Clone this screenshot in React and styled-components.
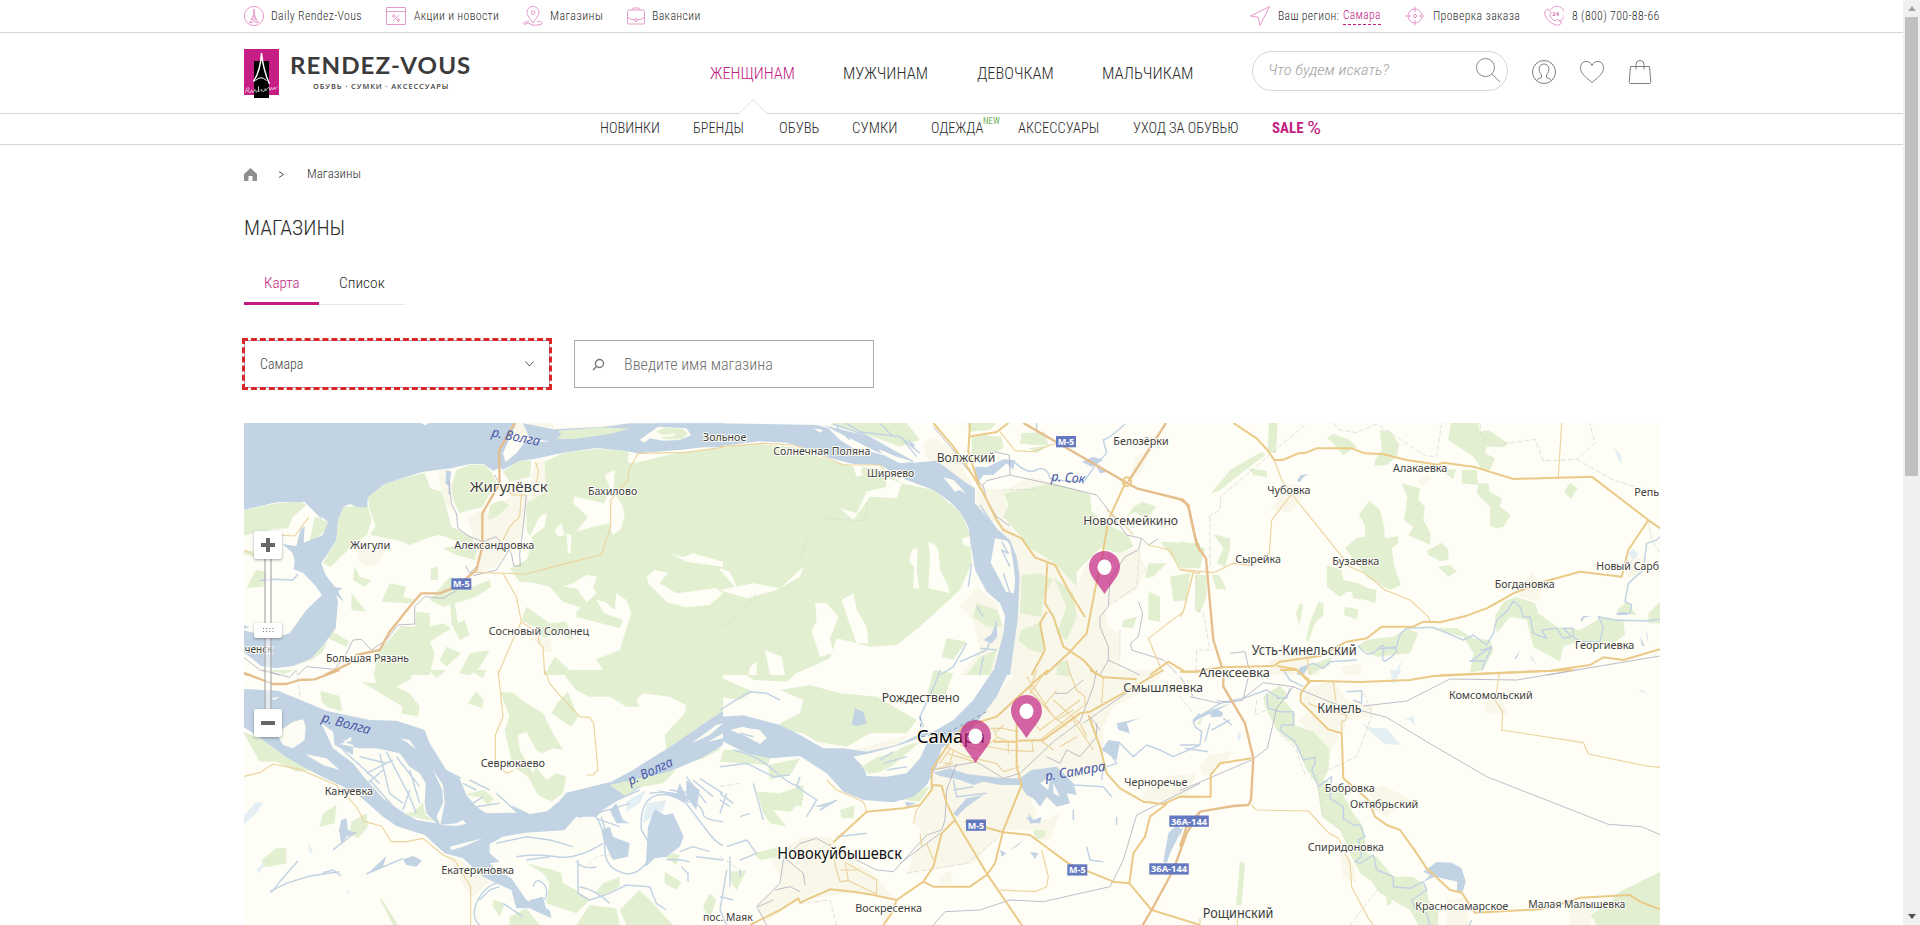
import React, { useLayoutEffect, useRef, useState } from 'react';
import styled, { createGlobalStyle, css } from 'styled-components';

const Global = createGlobalStyle`
  * { box-sizing: border-box; }
  html, body { margin: 0; height: 925px; overflow: hidden; background: #fff; }
  body { font-family: Roboto, "Liberation Sans", sans-serif; font-stretch: 75%; font-weight: 300; color: #2b2b2b; }
`;

const Page = styled.div`
  display: flex;
  width: 1920px;
  height: 925px;
  overflow: hidden;
`;
const Content = styled.div`
  flex: none;
  width: 1903px;
`;
const Wrap = styled.div`
  width: 1416px;
  margin: 0 0 0 244px;
`;

/* Text set to a given measure */
const FitBox = styled.span`
  display: inline-block;
  flex: none;
  width: ${(p) => p.$w}px;
  white-space: nowrap;
`;
const FitInner = styled.span`
  display: inline-block;
  transform-origin: 0 50%;
`;
function Fit({ w, children, ...rest }) {
  const ref = useRef(null);
  const [k, setK] = useState(1);
  useLayoutEffect(() => {
    if (ref.current) setK(w / ref.current.offsetWidth);
  }, [w]);
  return (
    <FitBox $w={w} {...rest}>
      <FitInner ref={ref} style={{ transform: `scaleX(${k})` }}>{children}</FitInner>
    </FitBox>
  );
}

/* ---------- top bar ---------- */
const TopBar = styled.div`
  height: 33px;
  border-bottom: 1px solid #d6d6d6;
`;
const TopRow = styled(Wrap)`
  display: flex;
  justify-content: space-between;
  height: 32px;
  font-size: 13px;
  letter-spacing: 0.4px;
`;
const TopGroup = styled.div`
  display: flex;
  align-items: center;
  height: 32px;
`;
const TopLink = styled.a`
  display: flex;
  align-items: center;
  margin-left: ${(p) => p.$gap || 0}px;
  & > span { padding-bottom: 2px; }
`;
const LineIcon = styled.svg`
  flex: none;
  width: ${(p) => p.$w || 20}px;
  height: ${(p) => p.$h || p.$w || 20}px;
  margin-right: ${(p) => p.$mr || 0}px;
  fill: none;
  stroke: ${(p) => p.$c || '#e07fbe'};
  stroke-width: ${(p) => p.$s || 0.8};
`;
const City = styled.span`
  display: inline-block;
  height: 18px;
  margin-left: 4px;
  color: #c21d81;
  line-height: 16px;
  border-bottom: 1px dashed #c21d81;
`;

/* ---------- header ---------- */
const Header = styled.div`
  height: 81px;
  border-bottom: 1px solid #d6d6d6;
`;
const HeaderRow = styled(Wrap)`
  display: flex;
  height: 80px;
`;
const Logo = styled.div`
  display: flex;
  width: 466px;
  padding-top: 16px;
`;
const LogoText = styled.div`
  display: flex;
  flex-direction: column;
  margin-left: 11px;
  padding-top: 3px;
  font-stretch: 100%;
`;
const Brand = styled.div`
  height: 28px;
  font: 700 22.5px/28px Lato, sans-serif;
  letter-spacing: 1px;
  color: #3b3b3b;
`;
const Slogan = styled.div`
  padding-left: 23px;
  font: 600 7.4px/12px "Open Sans", sans-serif;
  letter-spacing: 0.9px;
  color: #444;
`;
const MainNav = styled.nav`
  display: flex;
  width: 542px;
  padding-top: 29px;
  font-size: 17px;
  line-height: 22px;
`;
const MainLink = styled.a`
  position: relative;
  margin-right: ${(p) => p.$mr || 0}px;
  color: ${(p) => (p.$on ? '#c21d81' : '#2b2b2b')};
`;
const Caret = styled.svg`
  position: absolute;
  left: 29px;
  top: 37px;
  width: 28px;
  height: 16px;
`;
const Search = styled.div`
  display: flex;
  align-items: center;
  justify-content: space-between;
  width: 256px;
  height: 40px;
  margin: 18px 24px 0 0;
  padding: 0 7px 2px 15px;
  border: 1px solid #d6d6d6;
  border-radius: 20px;
  color: #a3a3a3;
  font-size: 15px;
  font-style: italic;
`;
const Tools = styled.div`
  display: flex;
  gap: 24px;
  padding-top: 27px;
`;

const SubNav = styled.nav`
  display: flex;
  height: 31px;
  padding-left: 600px;
  border-bottom: 1px solid #d6d6d6;
  font-size: 14px;
  line-height: 29px;
`;
const SubLink = styled.a`
  position: relative;
  display: flex;
  margin-right: ${(p) => p.$mr || 0}px;
`;
const New = styled.span`
  position: absolute;
  left: 52px;
  top: 1px;
  font-size: 8.5px;
  font-weight: 400;
  line-height: 12px;
  color: #77b25a;
`;
const Sale = styled.span`
  display: flex;
  gap: 4px;
  color: #c21d81;
  font-weight: 700;
`;
const Percent = styled.span`
  font-size: 17.5px;
  font-weight: 400;
  line-height: 28px;
`;

/* ---------- page body ---------- */
const Crumbs = styled.div`
  display: flex;
  align-items: center;
  height: 26px;
  margin-top: 16px;
  padding-top: 1px;
  font-size: 12.5px;
  & > span { padding-bottom: 3px; }
`;
const Title = styled.h1`
  height: 30px;
  margin: 26px 0 0;
  font-size: 21px;
  line-height: 30px;
  font-weight: 350;
`;
const Tabs = styled.div`
  display: flex;
  margin-top: 25px;
`;
const Tab = styled.div`
  display: flex;
  width: ${(p) => p.$w}px;
  height: 37px;
  padding-left: 20px;
  font-size: 15.5px;
  font-weight: 360;
  line-height: 31px;
  border-bottom: 1px solid #e6e6e6;
  ${(p) => p.$on && css`color: #c21d81; border-bottom: 3px solid #c21d81;`}
`;
const Filters = styled.div`
  display: flex;
  gap: 24px;
  margin: 35px 0;
`;
const Field = styled.div`
  display: flex;
  align-items: center;
  width: ${(p) => p.$w}px;
  height: 48px;
  border: 1px solid #aeaeae;
  padding: 0 ${(p) => p.$pr || 15}px 0 ${(p) => p.$pl}px;
  font-size: ${(p) => p.$fs}px;
  color: ${(p) => p.$c};
  ${(p) => p.$marked && css`outline: 3px dashed #d9272a; outline-offset: -1px; justify-content: space-between;`}
`;

/* ---------- map ---------- */
const MapBox = styled.div`
  position: relative;
  width: 1416px;
  height: 502px;
  overflow: hidden;
  background: #fefef6;
`;
const MapSvg = styled.svg`
  display: block;
  width: 1416px;
  height: 502px;
`;
const PinSvg = styled.svg`
  position: absolute;
  left: ${(p) => p.$x}px;
  top: ${(p) => p.$y}px;
  width: 31px;
  height: 43px;
`;
const Zoom = styled.div`
  position: absolute;
  left: 10px;
  top: 108px;
  display: flex;
  flex-direction: column;
  align-items: center;
  width: 28px;
`;
const ZoomBtn = styled.div`
  display: flex;
  align-items: center;
  justify-content: center;
  width: 28px;
  height: ${(p) => p.$h || 28}px;
  border-radius: 2px;
  background: #fff;
  box-shadow: 0 1px 3px rgba(0, 0, 0, 0.35);
  z-index: 1;
`;
const Track = styled.div`
  width: 8px;
  height: ${(p) => p.$h}px;
  border: solid rgba(120, 120, 120, 0.38);
  border-width: 0 2px;
  background: rgba(255, 255, 255, 0.5);
`;

/* ---------- scrollbar ---------- */
const Scroll = styled.div`
  display: flex;
  flex-direction: column;
  align-items: center;
  width: 17px;
  height: 925px;
  background: #f0f0f0;
`;
const Arrow = styled.div`
  flex: none;
  display: flex;
  align-items: center;
  justify-content: center;
  width: 17px;
  height: 17px;
`;
const Thumb = styled.div`
  width: 13px;
  height: 459px;
  margin-bottom: auto;
  background: #c0c0c0;
`;

/* Map sheets: each one is drawn at triple scale from its own origin */
const ORIGIN = { a: [243, 420], b: [243, 670], c: [720, 420], d: [720, 670], e: [1180, 420], f: [1180, 670] };

const FOREST = {
  a: [
    'M0 270L100 250 175 245 190 256 150 290 135 325 90 328 0 348Z',
    'M215 290L255 305 245 335 200 365Z',
    'M0 395L30 392 35 412 0 400ZM40 450L75 455 60 500 10 505 30 465Z',
    'M300 262L345 258 372 250 385 300 372 345 330 372 300 405 262 442 240 430 280 360 285 300Z',
    'M375 232L420 195 460 180 545 158 562 205 595 215 610 260 625 320 690 352 690 380 640 362 590 345 560 352 500 375 470 362 380 345 398 318 380 270Z',
    'M625 200L640 150 680 134 725 134 748 160 762 190 735 230 718 262 682 270 650 280 630 240Z',
    'M780 155L830 122 865 122 862 170 800 185Z M740 255L775 240 800 255 760 290 735 300Z',
    'M905 125L960 99 1060 86 1152 93 1180 128 1310 97 1440 85V765H1090L1060 718 1130 690 1165 580 1150 540 1120 520 1115 570 1085 545 1060 540 1085 580 1140 600 1130 625 1000 590 1000 575 1060 520 1050 500 1062 470 1030 465 990 490 960 500 1000 505 1030 545 1020 565 960 545 920 500 870 488 830 485 800 445 850 420 870 360 850 330 850 250 910 215Z',
    'M600 385L650 375 700 390 695 420 640 405Z M620 470L690 500 740 480 745 500 700 530 600 560 560 540Z',
    'M335 440L350 470 385 480 365 500 330 480Z M440 490L490 500 480 530 520 540 500 550 415 545Z M325 520L370 575 325 570Z',
    'M565 445L585 440 585 480 562 480Z M250 625L320 665 310 680 255 655ZM620 530L635 545 645 610 665 600 680 645 650 660 625 610Z',
    'M520 575L560 580 560 620 600 610 625 625 560 665 575 700 560 765H395L400 700 475 618 515 620Z',
    'M850 560L920 610 970 605 990 660 945 640 900 655 880 625 835 600Z M610 680L655 700 610 740 590 720Z M680 700L740 690 705 750 680 765 650 760Z',
    'M935 710L975 745 990 765H905Z M1215 705L1240 710 1240 765H1200Z M215 690L255 665 235 700 205 720 150 738 180 715Z',
  ],
  b: [
    'M355 35L400 40 390 5 400 0H515L500 30 460 50 500 70 530 110 525 140 475 130 480 110Z',
    'M232 62L290 78 298 125 250 110 235 92Z M60 0H155L125 12ZM700 65L722 90 718 115 675 100Z M560 0H610L580 25Z M680 0H730L720 25Z',
    'M770 65L810 68 850 100 900 130 930 190 960 240 930 235 895 250 880 240 850 185 825 195 830 240 870 310 880 290 910 330 940 310 970 320 960 370 925 395 885 375 855 320 810 290 785 180 800 140Z',
    'M955 0H1440V122L1340 190 1270 240 1265 195 1325 130 1330 105 1280 80 1200 70 1180 90 1190 110 1150 110 1100 80 1040 80 1000 60 975 30Z',
    'M975 65L1005 140 985 170 925 130 945 95Z M0 185L60 210 130 262 220 300 160 305 100 275 50 275Z M270 290L330 350 340 380 290 340Z',
    'M240 430L280 405 275 460 230 470Z M55 570L100 535 130 535 130 580 80 590 60 590Z M325 455L370 430 375 470 345 505 320 490Z M415 685L465 765H450L412 690Z',
    'M490 440L540 400 560 440 585 455 510 440Z M670 375L720 360 750 385 740 410 700 370Z',
    'M850 580L930 600 955 610 960 640 1000 660 1040 690 1000 730 970 720 910 700 920 640 900 610Z M1000 765L1040 705 1120 715 1130 765Z M1080 640L1130 620 1130 650 1080 680 1060 665Z',
    'M1380 240L1440 235 1380 265 1310 290 1260 340 1170 355 1150 380 1200 345 1300 300Z M1400 670L1420 690 1400 750 1380 710Z M1130 720L1190 660 1220 690 1290 765H1150Z',
    'M750 690L785 700 770 740 750 710Z M800 740L850 715 890 765H800Z M1265 605L1315 635 1300 660 1265 640ZM1290 550L1310 555 1300 585 1265 560Z',
  ],
  c: [
    'M0 80L120 72 220 82 320 118 400 140 410 170 430 140 490 150 545 190 640 210 720 275 750 340 755 430 720 510 665 560 600 620 530 675 450 680 350 655 330 715 240 755 200 765H0Z',
    'M850 220L1000 188 1110 222 1115 275 1170 318 1225 345 1240 380 1200 400 1140 385 1100 425 1070 455 1070 500 1000 425 930 385 850 290 865 255Z',
    'M905 40L975 35 985 75 940 75 900 70Z M790 45L845 50 850 85 800 110 755 120 755 50Z M925 85L990 75 950 100ZM740 9H830L810 30 750 35Z',
    'M330 15L460 50 540 80 600 60 560 9H340Z M1270 245L1308 260 1280 300 1245 275 1220 290 1240 260Z',
    'M905 465L960 460 1000 480 970 530 965 590 900 580Z M905 630L965 605 970 700 930 690 895 660Z M1000 470L1060 520 1070 590 1040 660 1010 640 1040 560Z',
    'M1285 430L1340 430 1300 470 1275 475Z M1285 515L1320 530 1320 605 1285 600Z M1350 470L1410 460 1400 540 1360 545Z M1210 600L1250 590 1240 625 1205 620Z M1320 365L1440 370V445H1380L1340 390Z',
    'M770 550L830 570 850 620 800 620 760 590Z M780 710L830 690 810 765H740ZM680 655L740 665 720 690 700 720 665 710ZM1010 730L1040 720 1055 765H1010Z',
  ],
  d: [
    'M60 0H240L200 35 100 30ZM180 60L270 45 360 70 470 80 590 150 560 190 450 190 380 230 290 215 250 190 180 180 180 160 240 130 250 90Z',
    'M0 20L40 40 100 65 60 90 0 80ZM10 240L90 240 150 265 145 285 0 275ZM145 285L240 265 215 310 150 330Z',
    'M110 365L180 370 250 345 250 390 210 425 160 420 200 470 150 460 130 430ZM180 390L250 360 245 410Z',
    'M100 550L180 530 175 560 120 570ZM30 605L80 600 50 660 35 640Z M640 0L700 10 670 90 620 80Z M530 370L630 350 600 395 545 390Z M1020 0H1045V20L1020 15ZM940 480H975V500L945 510Z',
    'M430 290L470 265 540 235 600 210 560 240 500 290 460 310Z M360 420L405 405 400 445 365 445Z',
  ],
  e: [
    'M267 9H293L288 100 262 95Z M92 222L150 150 245 95 257 105 215 135 120 210ZM205 145L260 152 262 172 220 165Z',
    'M440 55L460 42 510 60 530 80 490 105 455 65ZM600 30L632 35 658 75 650 110 620 135 585 138 583 125 605 90Z',
    'M812 9H895L900 35 925 30 985 70 970 82 920 80 915 100 945 115 930 150 905 148 880 110 805 60ZM845 150L890 150 895 195 845 190ZM895 190L925 190 930 215 965 235 960 260 992 285 970 320 950 325 930 318 930 260 890 220Z',
    'M1170 188L1193 205 1172 237 1152 215Z M665 190L720 205 715 240 735 260 730 300 752 340 750 375 685 345 700 320 672 300 682 230Z',
    'M568 242L600 270 612 320 615 355 655 348 655 370 635 385 645 445 663 495 630 510 560 470 495 385 530 355 555 350 555 315 537 285Z',
    'M440 435L485 450 490 480 535 490 565 505 590 510 585 550 560 540 520 535 515 515 500 515 480 530 440 500ZM740 392L785 368 805 390 805 420 780 423 745 405ZM775 440L810 435 830 455 805 470ZM495 560L535 568 530 598 492 585Z',
    'M360 548L370 555 358 615 348 580ZM415 545L430 550 430 585 405 610 385 665 378 660 390 605Z M100 343L150 355 150 385 135 440 110 430 130 385Z',
    'M0 362L75 385 60 445 0 430ZM95 465L118 465 140 508 110 508ZM45 465H80L80 530 60 578 48 570ZM0 465L30 460 20 520 0 530Z',
    'M560 660L640 650 680 625 715 640 690 700 590 710 530 680ZM750 625L830 625 880 655 930 660 940 690 910 750 870 758 880 700 850 650Z',
    'M945 590L970 545 1010 530 1065 550 1075 580 1130 620 1200 630 1270 590 1330 600 1335 645 1300 670 1190 665 1150 680 1140 725 1060 680 1040 600 990 590 950 640Z M1310 570L1340 545 1370 585 1320 580ZM1405 580L1440 545V610H1405ZM390 735L455 712 450 735 390 765ZM780 150L828 148 820 178Z',
  ],
  f: [
    'M250 80L300 45 320 70 310 90 345 130 345 165 400 185 450 240 445 300 430 330 455 340 460 360 485 365 520 430 540 455 550 475 560 550 590 560 640 620 700 620 740 650 745 690 775 725 775 765H715L690 720 600 670 570 630 540 610 510 550 480 480 425 440 410 340 380 300 350 230 290 180 255 110Z',
    'M180 575L195 580 190 640 185 705H168Z M1440 605L1310 670 1290 700 1232 735 1250 765H1440Z M50 160L70 140 60 165ZM620 620L635 700 620 710Z',
  ],
};

const CLEAR = {
  a: [
    'M1085 165L1115 150 1112 215 1140 260 1145 290 1132 330 1108 345 1100 310 1050 320 1000 335 1035 290 990 250 995 230 1085 250 1100 200Z',
    'M890 290L912 278 905 320 865 350 855 410 830 430 865 340ZM935 330L955 310 965 345 945 350ZM970 340L985 345 983 400 975 400Z',
    'M1282 400L1320 412 1350 400 1440 425V440L1380 432 1330 425Z M1212 470L1235 450 1275 458 1250 490 1300 520 1420 505 1440 520 1400 555 1330 562 1270 545 1215 490Z',
    'M1155 105H1182V128H1155Z',
  ],
  c: [
    'M575 390L592 385 590 450 598 505 580 505 582 440 568 425ZM625 365L640 370 655 390 660 450 680 490 690 520 650 510 625 505 630 410Z',
    'M285 548L320 550 355 590 330 655 340 700 300 710 275 635 290 600ZM365 540L400 520 410 570 440 620 445 670 410 670 385 600Z',
    'M360 265L410 280 440 215 500 200 495 170 545 190 530 235 450 230 400 300Z M0 445L30 455 50 500 100 490 180 505 250 440 240 470 170 510 80 535 0 510 45 500 0 450Z',
    'M135 690L185 710 195 765H150ZM90 740L110 725 110 765H85ZM725 355L750 350 750 380 730 375ZM400 130L430 165 410 170Z M775 165L800 155 770 200Z',
  ],
};

const TOWN = {
  a: ['M585 150L620 150 620 240 650 300 600 240Z M670 290L720 270 745 280 835 200 860 240 870 215 990 212 980 225 940 250 970 260 960 285 860 250 835 345 790 400 760 440 700 460 690 340Z M345 390H425L410 430 370 440 345 420Z M875 125H915L905 210 860 210Z M845 655H925V695H900L880 665Z', 'M560 10L720 40 640 60 570 40Z M760 10L930 10 940 50 860 60 790 55Z'],
  b: ['M610 555L660 575 740 635 690 680 665 655Z'],
  c: [
    'M610 70L640 50 700 90 760 200 680 160 620 115Z M770 200L850 210 930 170 1000 188 850 220 860 260 850 300 930 390 1000 425 1070 500 1100 430 1250 385 1280 450 1250 510 1160 560 1160 620 1200 640 1200 765H870L895 590 890 450 840 330 770 260Z',
    'M1225 180L1250 110 1300 80 1260 160ZM770 500L830 550 850 620 840 765H720L780 690 760 600 720 560Z',
  ],
  d: ['M900 0H1340L1280 60 1180 110 1150 170 1150 290 1060 330 930 390 950 420 940 480 850 480 760 580 560 610 610 490 580 460 640 350 640 290 700 200Z', 'M150 560L250 500 330 500 380 560 460 610 520 680 400 670 240 690 130 760 110 700 190 640Z M1270 360L1330 320 1430 310 1400 380 1270 400ZM930 470L1020 430 990 510 950 510ZM655 620L690 600 700 640 660 645ZM490 720L520 690 500 765Z M370 250L560 195 480 310Z', 'M0 190L180 170 250 200 120 260Z'],
  e: ['M270 270L330 190 370 200 365 240 330 275ZM710 180L740 160 755 175 730 198ZM1010 510L1055 460 1085 490 1080 545 1020 530ZM1340 420L1400 410 1380 470 1340 470Z M480 740L545 730 540 765H490Z M270 720L380 690 420 765H270Z'],
  f: ['M370 60L460 30 500 90 580 110 570 140 500 150 490 190 440 180 370 100ZM915 80L960 75 985 135 915 130ZM570 370L605 345 690 385 620 440 580 420ZM60 290L90 255 155 245 140 270 100 310 70 315ZM480 550L520 575 530 640 490 620ZM800 690L850 680 870 765H800ZM1165 700L1240 690 1230 765H1170ZM350 150L400 120 440 180 480 200 450 240 400 190Z'],
};

const WATER = {
  a: [
    'M0 0H720L820 10 780 100 790 135 750 152 722 132 680 132 625 145 540 155 460 180 420 195 375 232 372 262 345 262 320 252 300 262 285 300 280 360 235 430 248 465 275 500 285 545 278 625 245 670 205 715 150 738 100 745 55 738 0 695V630L90 655 140 640 190 570 237 525 215 495 180 458 152 448 155 420 148 398 118 372 160 378 172 330 185 318 182 368 240 345 255 305 235 290 200 262 185 246 100 247 0 270Z',
    'M820 100L850 60 900 65 960 60 1100 50 1200 25 1240 10H1440V82L1380 82 1310 90 1182 100 1150 93 1060 84 960 98 870 118 830 122 780 150 770 140Z',
    'M840 10L930 28 1080 20 1160 10H1440V40H1200L1000 62 930 65 860 55Z',
    'M272 500L298 505 285 515 303 547 280 525ZM20 620L0 628V615ZM610 150L625 155 618 200 607 190Z',
  ],
  b: [
    'M0 57L105 62 160 85 250 122 380 150 460 152 545 180 560 220 610 300 650 320 720 350 765 378 810 408 860 432 912 424 950 392 970 368 1105 335 1170 300 1230 262 1290 225 1340 190 1440 122V225L1380 262 1290 300 1220 335 1150 375 1080 420 1060 440 1020 440 970 480 850 488 780 500 740 522 740 550 770 575 740 580 760 600 805 625 850 690 920 720 925 745 860 715 820 715 805 660 760 640 720 620 660 565 605 550 545 495 460 468 420 440 340 370 290 345 240 322 180 290 130 262 60 210 0 170Z',
    'M1208 590L1215 470 1235 418 1265 435 1290 430 1322 500 1310 530 1270 560 1235 565Z M480 568L510 558 537 572 520 590 490 585Z M295 450L310 445 315 480 340 490 310 500 295 525 288 480Z',
    'M1075 480L1100 470 1110 500 1160 520 1155 560 1110 570 1085 520ZM375 610L430 558 420 590 390 605ZM1100 420L1120 400 1140 450 1160 460 1120 460ZM1330 330L1370 360 1360 420 1330 380ZM1240 360L1300 370 1310 340 1340 400Z M860 690L900 680 910 720 870 720Z',
  ],
  c: [
    'M0 10L290 15 325 25 360 60 400 80 470 100 580 128 650 122 700 160 740 190 765 205 765 250 800 290 835 330 870 360 890 410 899 470 893 600 870 765H818L850 640 855 588 840 550 800 515 765 450 752 370 745 320 720 275 690 245 640 210 560 180 480 135 400 132 330 115 290 95 200 68 120 64 0 78Z',
    'M765 140L800 142 850 118 885 120 880 150 860 130 820 165 790 165 770 195ZM1130 140L1165 155 1140 160ZM1085 125L1120 110 1150 120 1115 140ZM790 660L820 640 830 610 832 650 815 670Z',
    'M310 15L450 50 580 125 470 95ZM560 55L585 75 580 85Z',
  ],
  d: [
    'M820 0L760 90 700 150 640 185 600 192 530 225 440 245 370 235 310 235 240 195 180 165 70 136 0 140V210L80 250 150 265 240 258 320 310 370 365 430 390 520 397 580 380 620 345 650 290 665 235 760 170 830 80 868 0Z',
    'M640 308L690 295 740 312 850 325 900 325 935 300 1010 290 1030 310 1060 340 1070 375 1040 370 1050 400 1010 410 980 380 960 410 940 385 920 375 900 345 840 345 790 335 760 345 720 330 660 318Z',
    'M1330 575L1345 490 1370 465 1385 480 1350 550 1340 580ZM395 165L405 115 430 125 440 160 415 168ZM700 430L740 385 790 375 740 410 710 440ZM930 545L955 550 945 567ZM925 430L940 450 965 440 960 460 930 460ZM840 540L860 550 845 560ZM870 540L910 510 890 530Z',
    'M1145 240L1165 210 1200 215 1190 270 1160 250ZM1190 160L1260 145 1220 160 1230 190 1195 180ZM280 410L350 390 310 410ZM450 270L490 260 480 285ZM555 395L590 400 560 410Z',
  ],
  e: ['M350 183L362 165 385 163 370 172 360 187ZM868 720H915L925 710 910 725H870ZM1200 600L1210 588 1235 588 1215 592 1205 605ZM1002 718L1020 690 1010 715ZM1380 650L1395 680 1385 675Z M1400 630L1405 670 1400 650Z M360 740L385 740 370 765H350ZM1310 580L1335 575 1345 585 1310 585Z'],
  f: ['M730 605L770 576 815 578 845 595 857 635 848 665 830 662 832 635 765 620 730 635 750 615ZM50 140L80 125 130 108 150 100 130 112 60 145 35 160ZM88 130L110 115 130 130 125 140 95 142Z M0 480L10 470 0 500Z'],
};

const PALE = {
  b: ['M0 440L40 395 60 400 40 430 0 465ZM40 600L70 570 50 610ZM1150 395L1210 360 1190 400 1150 425ZM1210 400L1270 390 1260 420 1200 460ZM100 180L180 150 150 190ZM195 520L210 545 200 550ZM315 655L322 675 312 665Z'],
  e: ['M1300 83L1320 100 1328 132 1315 120ZM1345 400L1360 385 1375 405 1360 420ZM1055 705L1070 735 1050 715ZM650 750L665 720 655 765H640Z'],
  f: ['M540 155L580 175 620 175 662 225 612 222ZM675 150L700 135 705 170 690 150ZM170 200L182 180 180 215ZM630 0H665L640 45ZM1375 55L1400 68 1385 68Z'],
};

const ISLAND = {
  a: ['M1190 60L1245 20 1330 25 1345 45 1310 60 1260 62 1220 55 1205 68Z', 'M535 9H560L545 16Z'],
  b: [
    'M100 190L150 155 180 148 188 170 185 210 150 235 120 225Z',
    'M235 160L270 185 275 225 330 255 330 225 300 215 325 200 325 212 290 222 350 235 400 235 470 250 500 290 530 310 548 340 545 400 550 430 580 460 520 450 470 420 420 385 370 330 330 280 270 235Z',
    'M570 300L600 345 605 400 592 465 580 440 600 400 598 360Z M650 325L690 320 740 345 790 385 822 428 730 430 700 410 670 375Z M590 465L640 460 660 450 670 462 640 468Z',
    'M620 530L720 505 660 530 625 540ZM470 205L500 210 520 240 490 215ZM185 252L250 265 290 300 240 285ZM775 520L860 488 960 485 1000 440 1040 450 1070 500 1040 560 880 530 830 580 760 545Z',
    'M1345 220L1420 165 1440 160 1400 195ZM1395 215L1440 190V205ZM85 85L110 80 95 90Z',
  ],
  c: ['M670 172L700 180 720 200 740 225 720 210 705 215Z', 'M825 355L860 362 870 375 880 430 885 480 882 520 858 515 835 470 812 428Z', 'M470 85L530 110 580 125 540 130 500 110ZM280 25L310 30 300 38ZM360 60L420 75 440 90 400 85Z'],
  d: ['M30 180L70 170 120 180 140 205 120 222 80 200Z', 'M400 260L450 250 540 225 600 203 640 188 625 210 600 265 560 310 500 320 440 318 430 290Z', 'M960 340L990 320 985 360ZM1000 340L1020 380 1000 370Z'],
};

/* Woods that stand on the river islands */
const GROVE = {
  a: ['M1238 35L1262 24 1320 26 1335 42 1315 58 1268 58 1250 52 1290 48 1300 40 1260 44Z', 'M945 32L1080 22 1160 26 1100 42 1000 56 940 58 955 44Z'],
  b: ['M480 432L512 425 540 398 548 436 578 454 540 448Z', 'M672 372L722 360 752 384 738 408 712 380 690 380Z', 'M1100 345L1150 380 1180 352 1250 338 1300 300 1250 312Z'],
  d: ['M425 290L470 262 520 248 560 226 600 215 560 250 520 285 480 305 445 312Z'],
};

const STREAM = {
  a: ['M620 190L618 225M50 482L90 478 150 480 165 462M200 255L235 295'],
  b: [
    'M1050 430Q1085 470 1085 530T1130 605Q1170 625 1205 585T1195 480Q1190 400 1230 380T1330 400Q1360 440 1390 480T1440 527',
    'M1075 440Q1095 500 1105 560M1220 370Q1290 360 1335 385T1380 430 1440 455M1270 570Q1300 565 1340 575M1360 560L1440 570M1310 545L1350 530 1400 545',
    'M1005 570L1005 670 1040 690 1100 670 1150 645 1220 650 1240 700 1270 720M1000 575Q1020 600 1060 590M1100 700Q1060 660 1010 650M760 520L850 500 920 510 990 530M820 560Q880 550 940 560T1080 520M850 570L920 560',
    'M780 635Q730 640 705 690T710 765M710 690L740 660 770 650M870 650Q880 620 900 640T905 690M780 700L840 740M1315 590L1335 610 1335 635',
    'M85 668L110 635 165 572M80 665L130 640 200 618 290 605M240 608L270 600 295 618M370 612L480 565M270 540L340 485',
    'M340 370L420 300M410 250L440 370 480 400M430 245L500 380 520 430M300 240L410 340M370 310L450 270M460 260L530 350M480 420L500 360M380 330L460 420M500 300L530 400M350 260L430 280M680 330L740 360M690 400L720 380M700 410L770 400M660 340L700 360M760 370L820 425',
    'M1330 320L1390 400M1350 330L1410 380M1370 325L1440 370M1280 360L1350 370M1060 430L1160 400M1060 445L1130 470M1100 400L1190 360',
  ],
  c: [
    'M880 122Q920 165 950 150T990 175Q1050 190 1095 180L1130 130 1160 100 1150 60 1170 50 1195 30 1215 12M950 9L950 30',
    'M380 10L460 60 580 125M420 35L540 50 600 100M340 12L420 40 480 90M350 20L390 60M480 10L520 50M550 60L590 110',
    'M755 430L745 500M740 670L700 740 660 765M720 725L800 690 830 605M790 710L780 765M770 560L790 590M780 685L830 690M845 365L865 400 845 390 870 440M850 460L870 520M780 255L830 330M800 290L850 355',
  ],
  d: [
    'M0 120L40 95 90 65 140 70 180 90M40 240Q110 255 160 300T240 350M0 290L80 280 160 320 210 315M0 370L40 400M0 390L30 410M20 370L0 430M60 440L90 430M100 340L130 450M240 320L230 350 290 390 260 440M350 390L300 420M480 270L520 245M490 280L560 260M500 300L560 290M610 170L600 140 650 30 660 0M75 170L100 175M60 190L100 200M20 530L80 510 110 550 60 570M30 560L30 650M20 600L0 720 20 765M60 600L60 620M350 500L440 490M0 680L40 690',
    'M1160 290L1190 280 1170 250 1200 220 1240 260 1280 225 1320 240 1360 260 1440 225M1060 345L1150 350 1175 380M700 330L710 380 800 370M700 360L760 350M1100 530L1110 570 1150 575M1190 440V465M1060 420V450M920 440L935 460M1420 150L1440 130M1150 290L1145 330',
  ],
  e: [
    'M535 675Q560 720 590 690T610 700 635 710 620 685 650 680Q655 640 680 625L760 622 850 660 880 645 920 675 940 640 950 600 980 575 1000 543 1020 560 1030 590 1050 590 1060 640 1100 655 1085 630 1130 625 1150 655 1175 650 1150 625 1180 625 1180 650 1200 665 1260 665 1270 620 1255 590 1300 600 1400 603 1440 598',
    'M1440 350L1430 360 1400 370 1390 450 1345 490 1335 545 1355 555 1350 580 1310 580M360 745L400 730 430 745 450 725 530 720M870 725L935 680 910 690 900 690M935 680L905 750'],
  f: [
    'M260 70L265 115 300 125 340 125 340 165 305 165 300 180 345 215 370 270 405 262 405 280 395 300 415 350 455 320 450 385 490 410 490 445 520 465 540 465 555 500 535 510 545 560 525 575 540 580 580 555 590 600 640 620 640 650 690 655 730 635 740 660 695 690 705 715 740 730 750 765',
    'M300 85L260 60 190 85 120 100 40 150 45 170 65 185 60 225 0 225M310 0L330 30 370 50M330 55L320 85 290 85M500 65L545 62 545 100 520 90M15 235L85 245M90 160L75 215M130 145L155 165M95 180L150 150M875 750L868 765'],
};

/* [class, path] */
const ROADS = {
  a: [
    ['maj', 'M815 9L768 92 770 190 718 280 718 380 700 450 640 500 590 520 535 520 500 560 440 635 410 690 340 705 320 730 245 765'],
    ['min', 'M700 457L850 462 970 430 1075 405 1103 320 1103 240 1155 180 1158 150 1185 100 1330 97 1440 82'],
    ['min', 'M780 460L820 530 835 605 800 680 765 765M835 605L885 640 888 670 900 680 905 765M770 190L810 225 850 225M835 225L830 290 800 320 780 360M877 125L887 155 880 190M100 345L155 348 197 292M0 390L25 398'],
    ['rail', 'M618 180L625 250 640 280 645 325 680 350 720 365 760 350 780 375 800 385 780 420 760 450 690 467M850 225L838 345 830 400 832 438 812 438 805 400 790 385M668 437L680 460 700 440M640 512L600 535 545 530 515 560 515 612 465 615 430 660 385 690 355 658 330 660 310 700 275 748 190 740 165 765M0 710L50 750 110 765M755 165L770 190'],
    ['maj', 'M0 760L20 765'],
  ],
  b: [
    ['maj', 'M0 8L90 42 130 42 170 30 215 28 290 0'],
    ['min', 'M0 320L50 308 90 282 170 298 280 345 340 410 365 455 415 468 445 515 490 515 540 505 600 555 635 570 683 650 683 765M765 0L780 140 757 195 757 275 790 310 810 303M905 0L920 40 945 70 1010 140 1040 142 1052 160 1065 300 1050 315 1030 315'],
    ['rail', 'M60 0L140 22 160 0'],
    ['bound', 'M160 0L172 80M1020 600L1060 560 1120 550'],
  ],
  c: [
    ['sec', 'M640 9L700 80 735 130 785 210 830 300 850 330 905 355 945 412 1005 435 1050 520 1095 590M750 9L745 95 780 205M745 50L830 36 865 9M982 430L975 550 1000 590 1030 680 1090 720 1130 765M980 575L960 610 975 690 935 765'],
    ['maj', 'M910 9L1215 185 1250 205 1390 240 1405 260 1425 350 1440 395M1338 9L1225 185'],
    ['sec', 'M1218 185L1165 300 1145 420 1125 510 1100 640 1050 695 975 765M1208 184A13 13 0 1 1 1208 186M1290 765L1345 725 1395 755H1440'],
    ['min', 'M840 35L885 92 940 95 990 75 1035 68M0 80L130 70 220 75 300 105 370 135 480 135 510 170M1160 270L1210 310 1240 345M1285 375L1350 390 1380 450 1440 460M1420 460L1390 575 1285 655 1325 750M1040 720L1050 765'],
    ['rail', 'M640 20L700 90 735 140 790 200 800 240 830 290 870 318M785 200L800 182 870 165 960 185 1050 205 1130 225 1165 270 1220 345 1265 355 1255 390 1215 410 1170 480 1165 560 1140 590 1140 620 1165 680 1165 720 1140 765M870 165L868 105 820 95M1265 355L1285 375 1315 357M1255 545L1268 580 1255 650 1232 670 1235 690 1330 720 1370 760M1165 720L1260 765'],
    ['bound', 'M845 210L950 208M0 620L50 590 110 520M270 330L310 295 435 303 445 240M270 340L250 400 210 470M1200 630L1200 720M1260 370L1250 500 1160 560'],
  ],
  d: [
    ['sec', 'M890 160V290L905 345 850 480 825 580 800 615 750 650 640 650 610 635 530 690 515 730 490 765M635 345L665 347 680 400 705 450 800 610 905 765M735 455L850 487 930 495 1045 580 1180 635 1228 640 1295 720 1440 765M90 765L180 720 235 685 240 698 330 658 400 665 460 675 530 690M340 517L440 425 550 415 600 405 635 360 635 300 680 230 730 170 830 140 960 20 985 0M705 450L665 490 640 590 610 635'],
    ['sec', 'M895 212L970 210 1080 130 1110 125 1200 75 1330 0M1105 135L1140 230 1160 310 1200 355 1270 395 1330 402 1380 380 1440 380M1228 640L1240 550 1275 500 1290 440 1340 402M820 215H890M1110 0L1150 22 1250 28'],
    ['maj', 'M1440 425L1400 490 1360 600 1295 720 1268 765'],
    ['min', 'M680 230L740 260 830 280 850 305 900 290M680 250L780 280M660 280L690 235M700 240L690 280 670 280M640 300L700 280M700 210L860 240 940 245 935 210M820 175L830 200 865 215 865 250M830 205L780 240 720 225M850 165L830 185M810 175H850L895 185M920 20L1000 140 1040 170M950 0L930 60 1010 150 1060 120M930 70L980 0M900 110L960 180 1080 90M960 210L1100 100M1010 60L970 110M1050 10L1070 60 1095 80V105M1060 150L1120 240M1000 90L1080 160 1100 200M1150 22L1145 100M330 520L350 600 360 635 385 632 375 575M385 632L470 672 470 630 380 580M360 600L410 600M440 425L430 395 350 360 320 330M620 520L640 570M965 540L985 620 980 650 945 665 840 660M580 460L590 420 640 350M600 490L605 530M1000 240L960 210M1020 230L1070 200'],
    ['rail', 'M640 300L770 275 850 325 900 310 1000 215 1080 155 1120 50 1130 0M710 280L680 360 675 450 665 480 620 495 520 605 470 600 380 555 290 505 240 520 190 570 180 640 110 710 140 765M255 645L250 610 190 560M165 660L210 650 240 665M980 260L1020 280 1040 240 1080 260 1130 200 1130 160M1110 140L1140 180M1005 70L1040 70 1090 30M1090 160L1160 110 1290 20M640 765L675 725 780 720 870 690 970 695 1170 650 1210 570 1250 435 1440 340M540 580L660 490M115 710L160 690'],
    ['bound', 'M560 610L740 580 840 500M240 700L330 690 350 765M0 350L60 340M0 560L60 600'],
    ['ferry', 'M600 140L605 200 680 190 800 125'],
  ],
  e: [
    ['sec', 'M160 9L230 55 262 90 283 120 308 120 355 100 378 98 410 85 515 85 555 100 610 103 680 120 775 134 790 128 880 140 1000 177 1235 170 1405 300 1440 325M0 755H40L125 742 280 738 300 725 420 708 500 665 560 655 605 620 700 620 730 605 780 607 860 587 920 565 960 543 1000 520 1090 485 1200 455 1325 470 1345 390 1405 300M290 738L350 748 390 790M780 766L1110 752 1230 735 1270 712 1330 720 1440 688'],
    ['min', 'M1145 9L1135 170M283 120L305 180 335 222 510 440 555 460 615 510 690 540 745 590 750 605M335 222L275 300 268 400 215 437 160 430 100 458 0 448M38 460L10 575 0 590M380 710L390 765'],
    ['maj', 'M0 237L25 255 50 375 78 415 100 660 127 745'],
    ['rail', 'M150 700L195 695 205 740 220 765M1100 765L1440 708'],
    ['bound', 'M85 290L120 270 122 230 380 10M460 9L480 30 530 38 590 12 735 107 770 110 785 9M900 9L905 50 950 75 1065 58 1090 123 1190 118 1245 70 1230 10M1190 118L1300 180 1415 215M90 290L90 440 50 460 45 570 70 580 90 690 50 690 48 765M1405 300L1415 360 1440 400'],
  ],
  f: [
    ['maj', 'M130 0V50L195 160 220 265 213 390 205 405 160 408 60 425 20 470 0 530'],
    ['sec', 'M0 380H92V315L120 280 215 265M300 0H350L390 32 540 36 690 30 760 18 1180 0M390 32L362 70V95L445 178 485 190 490 325 565 390 585 440 620 465 660 480 700 535 740 595 810 660 845 668 885 728 1080 718 1150 700 1200 683 1350 675 1380 695 1440 718'],
    ['min', 'M460 36L468 95M385 100L430 120 500 135 498 150 485 153V190M958 12L945 90 968 125 965 180 1210 218 1225 252 1400 288 1440 292M213 405L230 420 385 423 445 488 475 505 510 580 515 650 565 745 580 765M60 765V745M172 765V735'],
    ['rail', 'M210 0L190 85 250 38 340 50 460 100 620 142 740 215 920 320 1285 463 1385 470 1440 494M550 108L680 93 810 27 1010 30 1190 0M340 50L290 115 262 235 215 270 0 362M190 90L150 97 110 92M30 80L120 100M0 20L40 80'],
    ['bound', 'M550 70L578 130 530 260 390 325M230 90L225 135 270 115M300 190L350 240 365 290 380 320M410 325L430 430 490 490M0 80L40 130M600 650L510 765'],
  ],
};

const LABELS = [
  ['Жигулёвск', 469.7, 492.3, 78, 15], ['Бахилово', 588, 495, 49.3], ['Жигули', 350, 549.3, 40.3], ['Александровка', 454.3, 549.3, 80],
  ['Сосновый Солонец', 488.7, 635.3, 100.3], ['Большая Рязань', 326, 662, 83], ['ченск', 244.5, 653, 28], ['Зольное', 703, 441.3, 43.3],
  ['Солнечная Поляна', 773.3, 455, 97], ['Ширяево', 867, 477, 47.3], ['Волжский', 936.7, 462.3, 58.7, 13], ['Белозёрки', 1113.3, 445.3, 55.3],
  ['Новосемейкино', 1083.3, 524.7, 94.7, 13], ['Севрюкаево', 480.7, 767.3, 64.3], ['Кануевка', 324.7, 795, 48.3], ['Екатериновка', 441.3, 874.3, 72.7],
  ['пос. Маяк', 703, 921.3, 49.7], ['Рождествено', 881.7, 702.3, 77.7, 12], ['Самара', 916.7, 743, 68.3, 18, '#000'], ['Смышляевка', 1123.3, 692.3, 79.7, 13],
  ['Черноречье', 1124.3, 785.7, 63], ['Новокуйбышевск', 777.3, 859, 124.7, 15.5, '#111'], ['Воскресенка', 855.3, 912, 66.7], ['Чубовка', 1267.3, 493.7, 43.3],
  ['Алакаевка', 1393, 472, 54.3], ['Репь', 1634.3, 495.7, 25], ['Сырейка', 1235.3, 562.7, 45.7], ['Бузаевка', 1332.3, 564.7, 47],
  ['Новый Сарб', 1596.3, 570, 62.7], ['Богдановка', 1494.7, 588, 60], ['Усть-Кинельский', 1251.7, 654.7, 105, 13.5], ['Георгиевка', 1575, 649, 59.3],
  ['Алексеевка', 1199, 676.7, 71, 13], ['Комсомольский', 1449, 698.7, 83.7], ['Кинель', 1317.3, 712.7, 44.3, 13.5], ['Бобровка', 1324.7, 792, 50],
  ['Октябрьский', 1350, 808.3, 68.3], ['Спиридоновка', 1307.7, 850.7, 76.3], ['Рощинский', 1202.7, 917.7, 70.7, 13.5], ['Красносамарское', 1415.3, 909.7, 93],
  ['Малая Малышевка', 1528.3, 907.7, 97],
];
const RIVERS = [
  ['р. Волга', 491, 436.5, 49, 11], ['р. Волга', 321, 721.5, 50, 15], ['р. Волга', 630.5, 785.5, 48, -25], ['р. Сок', 1051, 481, 34, 4], ['р. Самара', 1046, 781, 61, -10],
];
const SHIELDS = [
  ['М-5', 451.3, 578.3, 20], ['М-5', 1056, 436, 20], ['М-5', 966, 819.5, 20], ['М-5', 1067.3, 864.3, 20], ['36А-144', 1169.3, 815.5, 39.5], ['36А-144', 1149.3, 863.3, 39.5],
];

const STYLES = {
  maj: { stroke: '#e6bd8c', strokeWidth: 7 },
  sec: { stroke: '#ebca88', strokeWidth: 6 },
  min: { stroke: '#ecd39d', strokeWidth: 3.4 },
  rail: { stroke: '#b4b3c2', strokeWidth: 2.6 },
  bound: { stroke: '#dcdad2', strokeWidth: 2.4, strokeDasharray: '16 6' },
  ferry: { stroke: '#7fa0c4', strokeWidth: 3, strokeDasharray: '12 8' },
};

function Layer({ data, ...attrs }) {
  return Object.entries(data).map(([k, list]) => (
    <g key={k} transform={`translate(${ORIGIN[k]}) scale(${1 / 3})`} {...attrs}>
      {list.map((d, i) => <path key={i} d={d} />)}
    </g>
  ));
}

function Roads({ kinds }) {
  return Object.entries(ROADS).map(([k, list]) => (
    <g key={k} transform={`translate(${ORIGIN[k]}) scale(${1 / 3})`} fill="none" strokeLinejoin="round">
      {list.filter(([c]) => kinds.includes(c)).map(([c, d], i) => <path key={i} d={d} {...STYLES[c]} />)}
    </g>
  ));
}

const PlaceNames = styled.g`
  font-family: "Noto Sans", sans-serif;
  font-stretch: 100%;
  font-weight: 400;
  paint-order: stroke;
  stroke: #fffff8;
  stroke-width: 2px;
  stroke-linejoin: round;
`;
const RiverNames = styled.g`
  font-family: "Noto Sans", sans-serif;
  font-size: 13.5px;
  font-stretch: 100%;
  font-style: italic;
  font-weight: 400;
  fill: #4a58a8;
`;
const ShieldText = styled.text`
  font-family: "Noto Sans", sans-serif;
  font-size: 9px;
  font-weight: 700;
  fill: #fff;
  text-anchor: middle;
`;

function StoreMap() {
  return (
    <MapSvg viewBox="244 423 1416 502">
      <Layer data={TOWN} fill="#f8f7e9" />
      <Layer data={FOREST} fill="#e2f0d1" />
      <Layer data={CLEAR} fill="#fefef6" />
      <Layer data={PALE} fill="#e4eff3" />
      <Layer data={WATER} fill="#c2d3e4" />
      <Layer data={ISLAND} fill="#fdfdf3" />
      <Layer data={GROVE} fill="#e2f0d1" />
      <Layer data={STREAM} fill="none" stroke="#c2d3e4" strokeWidth="4.4" strokeLinejoin="round" />
      <Roads kinds={['bound', 'rail', 'ferry']} />
      <Roads kinds={['min']} />
      <Roads kinds={['sec', 'maj']} />
      {SHIELDS.map(([t, x, y, w], i) => (
        <g key={i}>
          <rect x={x} y={y} width={w} height="11.3" fill="#6479c0" />
          <ShieldText x={x + w / 2} y={y + 9} textLength={w - 3.5} lengthAdjust="spacingAndGlyphs">{t}</ShieldText>
        </g>
      ))}
      <PlaceNames>
        {LABELS.map(([t, x, y, w, s = 11.3, c = '#3e3e42']) => (
          <text key={t} x={x} y={y} fontSize={s} fill={c} textLength={w} lengthAdjust="spacingAndGlyphs">{t}</text>
        ))}
      </PlaceNames>
      <RiverNames>
        {RIVERS.map(([t, x, y, w, r], i) => (
          <text key={i} transform={`translate(${x} ${y}) rotate(${r})`} textLength={w} lengthAdjust="spacingAndGlyphs">{t}</text>
        ))}
      </RiverNames>
    </MapSvg>
  );
}

function Pin({ x, y }) {
  return (
    <PinSvg $x={x} $y={y} viewBox="0 0 31 43">
      <path fill="#c32483" fillOpacity="0.7" d="M15.5 0C24 0 31 7 31 15.5C31 25 23 31 15.5 43C8 31 0 25 0 15.5C0 7 7 0 15.5 0Z" />
      <ellipse cx="15.5" cy="16.3" rx="7" ry="7.8" fill="#fff" />
    </PinSvg>
  );
}

export default function App() {
  return (
    <Page>
      <Global />
      <Content>
        <TopBar>
          <TopRow>
            <TopGroup>
              <TopLink>
                <LineIcon $mr={7} viewBox="0 0 20 20"><circle cx="10" cy="10" r="9.6" /><path d="M10 3C10 9 8.5 13 5.5 16.5H8.3Q10 12.5 11.7 16.5H14.5C11.5 13 10 9 10 3ZM8.4 11H11.6M7.5 13.2H12.5" /></LineIcon>
                <Fit w={91}>Daily Rendez-Vous</Fit>
              </TopLink>
              <TopLink $gap={24}>
                <LineIcon $mr={8} viewBox="0 0 20 20"><path d="M.5 1.5H19.5V18.5H.5ZM.5 5.5H19.5M7 15L13 9" /><circle cx="7.8" cy="10" r="1.2" /><circle cx="12.2" cy="14" r="1.2" /></LineIcon>
                <Fit w={85}>Акции и новости</Fit>
              </TopLink>
              <TopLink $gap={24}>
                <LineIcon $mr={7} viewBox="0 0 20 20"><path d="M10 17C7 12 4 9.5 4 6.4A6 6 0 0 1 16 6.4C16 9.5 13 12 10 17Z" /><circle cx="10" cy="6.5" r="1.8" /><path d="M5.8 15.5Q.5 15.5 .5 17.3T3 17.8Q6 16.8 8 18.3T12.5 19.2L18 18.6Q20 17 18.5 16.2T14 15.5" /></LineIcon>
                <Fit w={53}>Магазины</Fit>
              </TopLink>
              <TopLink $gap={24}>
                <LineIcon $w={18} $mr={7} viewBox="0 0 18 18"><rect x=".5" y="3" width="17" height="14" rx="1.5" /><path d="M6 3V1H12V3M.5 10Q4 13 7.5 13M10.5 13Q14 13 17.5 10" /><circle cx="9" cy="13" r="1.4" /></LineIcon>
                <Fit w={49}>Вакансии</Fit>
              </TopLink>
            </TopGroup>
            <TopGroup>
              <TopLink>
                <LineIcon $mr={8} viewBox="0 0 20 20"><path d="M.5 10L19.5 .7 10 19.3 8.2 11.3Z" /></LineIcon>
                <Fit w={61}>Ваш регион:</Fit>
                <City><Fit w={38}>Самара</Fit></City>
              </TopLink>
              <TopLink $gap={24}>
                <LineIcon $mr={8} viewBox="0 0 20 20"><circle cx="10" cy="10" r="7" /><circle cx="10" cy="10" r="1.6" /><path d="M10 .5V6M10 14V19.5M.5 10H6M14 10H19.5" /></LineIcon>
                <Fit w={87}>Проверка заказа</Fit>
              </TopLink>
              <TopLink $gap={24}>
                <LineIcon $mr={8} viewBox="0 0 20 20"><path d="M6.5 4A7.5 7.5 0 1 1 15 15M1 5.5Q3 2.2 4.5 3.5L7 7Q7 8 5.6 9Q7 13 11 15Q12.5 13 13.5 13.6L17.5 16Q18 17.5 14.5 19.3Q5 18.5 1 9Q.3 7 1 5.5Z" /><text x="8.6" y="10.3" fontSize="6" fontWeight="700" fill="#dd6db5" stroke="none">24</text></LineIcon>
                <Fit w={88}>8 (800) 700-88-66</Fit>
              </TopLink>
            </TopGroup>
          </TopRow>
        </TopBar>
        <Header>
          <HeaderRow>
            <Logo>
              <svg width="35" height="49" viewBox="0 0 35 49">
                <rect width="35" height="46" fill="#c61e85" /><rect x="10" y="12" width="15" height="37" />
                <path d="M17.5 4C17 14 15 24 9.5 32.5M17.5 4C18.5 14 20.5 24 25.5 35" fill="none" stroke="#fff" strokeWidth="1.5" />
                <path d="M11.5 31.5Q17 26 22.5 31.5" fill="none" stroke="#fff" strokeWidth="1" />
                <path d="M1.5 44L2.5 39.5Q5.5 37.5 5 40T3 41.5L6 44 7 41.5Q8.5 40 8 42T10 43L10.5 40.5Q12.5 40 12 43.5L14.5 41.5V37.5V43L17 40.5Q18.5 40 17.5 42L20 42.5 21 39.5Q23 40 21.5 42L25 38 26 41.5 27.5 38.5 28.5 41 30.5 38 31 40.5 33.5 37.5" fill="none" stroke="#fff" strokeOpacity=".75" strokeWidth=".8" />
              </svg>
              <LogoText>
                <Brand><Fit w={181}>RENDEZ-VOUS</Fit></Brand>
                <Slogan><Fit w={136}>ОБУВЬ · СУМКИ · АКСЕССУАРЫ</Fit></Slogan>
              </LogoText>
            </Logo>
            <MainNav>
              <MainLink $on $mr={48}>
                <Fit w={85}>ЖЕНЩИНАМ</Fit>
                <Caret viewBox="0 0 28 16"><path d="M0 16V14.5L14 .7 28 14.5V16Z" fill="#fff" /><path d="M0 14.7L14 .7 28 14.7" fill="none" stroke="#d9d9d9" /></Caret>
              </MainLink>
              <MainLink $mr={49}><Fit w={85}>МУЖЧИНАМ</Fit></MainLink>
              <MainLink $mr={48}><Fit w={77}>ДЕВОЧКАМ</Fit></MainLink>
              <MainLink><Fit w={92}>МАЛЬЧИКАМ</Fit></MainLink>
            </MainNav>
            <Search>
              <Fit w={121}>Что будем искать?</Fit>
              <LineIcon $w={24} $c="#8a8a8a" $s={1} viewBox="0 0 24 24"><circle cx="9.5" cy="9.5" r="9" /><path d="M16 16L24 24" /></LineIcon>
            </Search>
            <Tools>
              <LineIcon $w={24} $c="#7d7d7d" $s={1} viewBox="0 0 24 24"><circle cx="12" cy="12" r="11.5" /><path d="M4.5 20.5Q5.5 18.5 9.5 17.6V15C7.5 13 7 10.5 7.2 8.2C7.4 5.5 9.5 4 12 4S16.6 5.5 16.8 8.2C17 10.5 16.5 13 14.5 15V17.6Q18.5 18.5 19.5 20.5" /></LineIcon>
              <LineIcon $w={24} $c="#7d7d7d" $s={1} viewBox="0 0 24 24"><path d="M12 22.5C6 17.5 .5 13.5 .5 7.8C.5 4 3 1.5 6.3 1.5C9 1.5 11 3 12 5.5C13 3 15 1.5 17.7 1.5C21 1.5 23.5 4 23.5 7.8C23.5 13.5 18 17.5 12 22.5Z" /></LineIcon>
              <LineIcon $w={24} $c="#7d7d7d" $s={1} viewBox="0 0 24 24"><path d="M2.5 6.5H21.5L22.8 22.3Q22.8 23.5 21.5 23.5H2.5Q1.2 23.5 1.2 22.3ZM8 9.5V4.5Q8 .5 12 .5T16 4.5V9.5" /></LineIcon>
            </Tools>
          </HeaderRow>
        </Header>
        <SubNav>
          <SubLink $mr={33}><Fit w={60}>НОВИНКИ</Fit></SubLink>
          <SubLink $mr={35}><Fit w={51}>БРЕНДЫ</Fit></SubLink>
          <SubLink $mr={33}><Fit w={40}>ОБУВЬ</Fit></SubLink>
          <SubLink $mr={34}><Fit w={45}>СУМКИ</Fit></SubLink>
          <SubLink $mr={35}><Fit w={52}>ОДЕЖДА</Fit><New><Fit w={17}>NEW</Fit></New></SubLink>
          <SubLink $mr={34}><Fit w={81}>АКСЕССУАРЫ</Fit></SubLink>
          <SubLink $mr={33}><Fit w={106}>УХОД ЗА ОБУВЬЮ</Fit></SubLink>
          <Sale><Fit w={31}>SALE</Fit><Percent><Fit w={14}>%</Fit></Percent></Sale>
        </SubNav>
        <Wrap>
          <Crumbs>
            <svg width="13" height="13" viewBox="0 0 13 13"><path d="M6.5 0L13 6V13H8.5V8H4.5V13H0V6Z" fill="#8f8f8f" /></svg>
            <svg width="50" height="9" viewBox="0 0 50 9"><path d="M22 1.5L26.5 4.5 22 7.5" fill="none" stroke="#555" /></svg>
            <Fit w={54}>Магазины</Fit>
          </Crumbs>
          <Title><Fit w={101}>МАГАЗИНЫ</Fit></Title>
          <Tabs>
            <Tab $on $w={75}><Fit w={36}>Карта</Fit></Tab>
            <Tab $w={86}><Fit w={46}>Список</Fit></Tab>
          </Tabs>
          <Filters>
            <Field $w={306} $pl={15} $fs={14} $c="#444" $marked>
              <Fit w={43}>Самара</Fit>
              <svg width="9" height="6" viewBox="0 0 9 6"><path d="M.5 .5L4.5 5 8.5 .5" fill="none" stroke="#555" /></svg>
            </Field>
            <Field $w={300} $pl={17} $fs={16} $c="#6f6f6f">
              <LineIcon $w={13} $mr={19} $c="#777" $s={1.4} viewBox="0 0 13 13"><circle cx="7.5" cy="5.5" r="4" /><path d="M4.5 8.5L1 12" /></LineIcon>
              <Fit w={149}>Введите имя магазина</Fit>
            </Field>
          </Filters>
          <MapBox>
            <StoreMap />
            <Pin x={845} y={128} />
            <Pin x={767} y={272} />
            <Pin x={716} y={297} />
            <Zoom>
              <ZoomBtn><svg width="14" height="14" viewBox="0 0 14 14"><path d="M5 0H9V5H14V9H9V14H5V9H0V5H5Z" fill="#666" /></svg></ZoomBtn>
              <Track $h={64} />
              <ZoomBtn $h={15}><svg width="11" height="5" viewBox="0 0 11 5"><path d="M0 .5H11M0 3.5H11" stroke="#777" strokeDasharray="1 2.2" /></svg></ZoomBtn>
              <Track $h={71} />
              <ZoomBtn><svg width="14" height="4" viewBox="0 0 14 4"><rect width="14" height="4" fill="#666" /></svg></ZoomBtn>
            </Zoom>
          </MapBox>
        </Wrap>
      </Content>
      <Scroll>
        <Arrow><svg width="8" height="5" viewBox="0 0 8 5"><path d="M4 0L8 5H0Z" fill="#a3a3a3" /></svg></Arrow>
        <Thumb />
        <Arrow><svg width="8" height="5" viewBox="0 0 8 5"><path d="M4 5L8 0H0Z" fill="#505050" /></svg></Arrow>
      </Scroll>
    </Page>
  );
}
